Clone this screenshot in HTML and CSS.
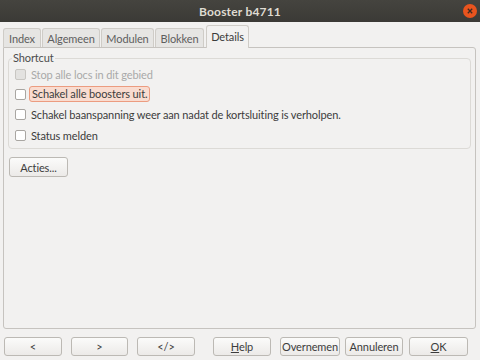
FILE: index.html
```html
<!DOCTYPE html>
<html lang="nl">
<head>
    <meta charset="UTF-8">
    <title>Booster b4711</title>
    <link rel="stylesheet" href="styles.css">
</head>
<body>
    <div class="titlebar">
        <span class="title">Booster b4711</span>
        <span class="close">
            <svg width="14" height="14" viewBox="0 0 14 14">
                <circle cx="7" cy="7" r="7" fill="#e9541e"/>
                <path d="M4.8 4.8 L9.2 9.2 M9.2 4.8 L4.8 9.2" stroke="#3c2a22" stroke-width="1.3"/>
            </svg>
        </span>
    </div>
    <div class="dialog">
        <div class="tabs">
            <div class="tab t-index">Index</div>
            <div class="tab t-alg">Algemeen</div>
            <div class="tab t-mod">Modulen</div>
            <div class="tab t-blok">Blokken</div>
            <div class="tab active">Details</div>
        </div>
        <div class="panel">
            <div class="group">
                <span class="legend">Shortcut</span>
                <label class="check disabled"><span class="box"></span><span>Stop alle locs in dit gebied</span></label>
                <label class="check"><span class="box"></span><span class="focus">Schakel alle boosters uit.</span></label>
                <label class="check"><span class="box"></span><span>Schakel baanspanning weer aan nadat de kortsluiting is verholpen.</span></label>
                <label class="check"><span class="box"></span><span>Status melden</span></label>
            </div>
            <button class="btn acties">Acties...</button>
        </div>
        <div class="buttons">
            <button class="btn b-prev">&lt;</button>
            <button class="btn b-next">&gt;</button>
            <button class="btn b-xml">&lt;/&gt;</button>
            <button class="btn b-help"><u>H</u>elp</button>
            <button class="btn b-apply">Overnemen</button>
            <button class="btn b-cancel">Annuleren</button>
            <button class="btn b-ok"><u>O</u>K</button>
        </div>
    </div>
</body>
</html>
```

FILE: styles.css
```css
* {
    box-sizing: border-box;
}
body {
    margin: 0;
    width: 480px;
    height: 360px;
    background: #f2f1f0;
    font-family: Lato, "Open Sans", sans-serif;
    font-size: 11px;
    letter-spacing: -0.12px;
    color: #3c3c3c;
    overflow: hidden;
}
.titlebar {
    height: 22px;
    background: linear-gradient(#45443f, #3b3a36);
    display: flex;
    align-items: center;
    justify-content: center;
    position: relative;
}
.title {
    color: #dfdbd2;
    font-weight: bold;
    font-size: 12px;
    letter-spacing: 0.2px;
}
.close {
    position: absolute;
    right: 3px;
    top: 4px;
    height: 14px;
}
.dialog {
    padding: 2px 0 0 3px;
}
.tabs {
    display: flex;
    align-items: flex-end;
    height: 23px;
}
.tab {
    height: 19px;
    padding-top: 3px;
    text-align: center;
    border: 1px solid #cfccc7;
    border-bottom: none;
    border-radius: 3px 3px 0 0;
    background: #e6e5e3;
    color: #5e5e5e;
    margin-right: 1px;
}
.t-index { width: 38px; }
.t-alg { width: 58px; }
.t-mod { width: 53px; }
.t-blok { width: 49px; }
.tab.active {
    width: 43px;
    height: 23px;
    padding-top: 4px;
    margin-left: 1px;
    margin-bottom: -1px;
    background: #f2f1f0;
    color: #3c3c3c;
    position: relative;
    z-index: 1;
}
.panel {
    width: 473px;
    height: 282px;
    border: 1px solid #c6c3bf;
    border-radius: 0 3px 3px 3px;
    padding: 10px 0 0 4px;
}
.group {
    position: relative;
    width: 463px;
    height: 91px;
    border: 1px solid #dcdad6;
    border-radius: 4px;
    padding: 5px 0 0 6px;
}
.legend {
    position: absolute;
    left: 3px;
    top: -9px;
    padding: 0 1px;
    background: #f2f1f0;
    color: #4c4c4c;
    line-height: 16px;
}
.check {
    display: flex;
    align-items: center;
    height: 20.3px;
    gap: 5px;
}
.box {
    width: 11px;
    height: 11px;
    border: 1px solid #a9a6a2;
    border-radius: 2px;
    background: #fff;
    flex: none;
}
.check.disabled {
    color: #a9a9a9;
}
.check.disabled .box {
    background: #e3e2e0;
    border-color: #c8c6c2;
}
.focus {
    height: 16px;
    line-height: 14px;
    background: #f9dcd0;
    border: 1px solid #ec9c80;
    border-radius: 3px;
    padding: 0 2px;
    margin-left: -2px;
}
.btn {
    font-family: inherit;
    font-size: 11px;
    letter-spacing: -0.12px;
    color: #3c3c3c;
    height: 19px;
    padding: 0;
    border: 1px solid #bcb9b4;
    border-radius: 3px;
    background: linear-gradient(#fbfbfa, #eceae8);
}
.acties {
    display: block;
    margin-top: 8px;
    margin-left: 1px;
    width: 59px;
    height: 20px;
}
.buttons {
    display: flex;
    margin-top: 8px;
    margin-left: 1px;
}
.b-prev { width: 58px; margin-right: 9px; }
.b-next { width: 57px; margin-right: 9px; }
.b-xml { width: 58px; margin-right: 18px; }
.b-help { width: 58px; margin-right: 9px; }
.b-apply { width: 60px; margin-right: 5px; }
.b-cancel { width: 58px; margin-right: 6px; }
.b-ok { width: 59px; }
```
